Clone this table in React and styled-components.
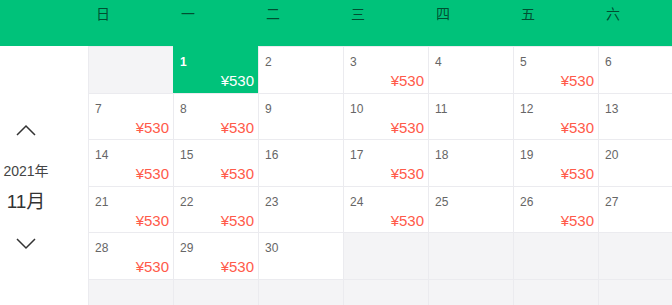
import React from "react";
import styled, { createGlobalStyle } from "styled-components";

const GlobalStyle = createGlobalStyle`
  html, body {
    margin: 0;
    padding: 0;
    background: #ffffff;
    font-family: "Liberation Sans", "Noto Sans CJK SC", sans-serif;
  }
`;

const WEEK = ["日", "一", "二", "三", "四", "五", "六"];
const PRICE_DAYS = [0, 1, 3, 5];
const FIRST_WEEKDAY = 1;
const DAYS_IN_MONTH = 30;

const buildCells = () => {
  const cells = [];
  for (let i = 0; i < 42; i++) {
    const day = i - FIRST_WEEKDAY + 1;
    if (day < 1 || day > DAYS_IN_MONTH) {
      cells.push({ key: i, empty: true });
    } else {
      cells.push({
        key: i,
        day,
        price: PRICE_DAYS.includes(i % 7) ? "¥530" : null,
        active: day === 1,
      });
    }
  }
  return cells;
};

const Chevron = ({ up }) => (
  <svg width="20" height="12" viewBox="0 0 20 12" fill="none">
    <polyline
      points={up ? "1,11 10,2 19,11" : "1,1 10,10 19,1"}
      stroke="#333"
      strokeWidth="1.5"
    />
  </svg>
);

const App = () => {
  const cells = buildCells();
  return (
    <Page>
      <GlobalStyle />
      <WeekBar>
        <SideSpacer />
        {WEEK.map((w) => (
          <WeekLabel key={w}>{w}</WeekLabel>
        ))}
      </WeekBar>
      <Body>
        <Side>
          <MonthNav>
            <ArrowButton>
              <Chevron up />
            </ArrowButton>
            <Year>2021年</Year>
            <Month>11月</Month>
            <ArrowButton>
              <Chevron />
            </ArrowButton>
          </MonthNav>
        </Side>
        <Grid>
          {cells.map((c) =>
            c.empty ? (
              <Cell key={c.key} $empty />
            ) : (
              <Cell key={c.key} $active={c.active}>
                <DayNum $active={c.active}>{c.day}</DayNum>
                {c.price && <Price $active={c.active}>{c.price}</Price>}
              </Cell>
            )
          )}
        </Grid>
      </Body>
    </Page>
  );
};

export default App;

const Page = styled.div`
  width: 672px;
  height: 305px;
  overflow: hidden;
`;

const WeekBar = styled.div`
  display: flex;
  height: 46px;
  background-color: #00c27a;
`;

const SideSpacer = styled.div`
  width: 88px;
  flex-shrink: 0;
`;

const WeekLabel = styled.div`
  width: 85px;
  flex-shrink: 0;
  padding: 6px 0 0 8px;
  box-sizing: border-box;
  font-size: 14px;
  line-height: 17px;
  color: rgba(0, 0, 0, 0.62);
`;

const Body = styled.div`
  display: flex;
`;

const Side = styled.div`
  width: 88px;
  flex-shrink: 0;
  display: flex;
  align-items: center;
  padding-top: 3px;
  box-sizing: border-box;
`;

const MonthNav = styled.div`
  width: 52px;
  display: flex;
  flex-direction: column;
  align-items: center;
  color: #333;
`;

const ArrowButton = styled.div`
  display: flex;
  justify-content: center;
  height: 12px;
`;

const Year = styled.div`
  margin-top: 27px;
  font-size: 14px;
  line-height: 16px;
  color: #444;
`;

const Month = styled.div`
  margin-top: 12px;
  font-size: 19px;
  line-height: 22px;
  color: #333;
  margin-bottom: 25px;
`;

const Grid = styled.div`
  display: grid;
  grid-template-columns: repeat(7, 85px);
  grid-auto-rows: 46.6px;
  flex-shrink: 0;
`;

const Cell = styled.div`
  box-sizing: border-box;
  border-left: 1px solid #ebebef;
  border-top: 1px solid #ebebef;
  background-color: ${(p) =>
    p.$active ? "#00c27a" : p.$empty ? "#f4f4f6" : "#ffffff"};
  border-color: ${(p) => (p.$active ? "#00c27a" : "#ebebef")};
  display: flex;
  flex-direction: column;
  padding: 8px 4px 0 6px;
`;

const DayNum = styled.span`
  font-size: 12px;
  line-height: 14px;
  color: ${(p) => (p.$active ? "#ffffff" : "#666")};
  font-weight: ${(p) => (p.$active ? 600 : 400)};
`;

const Price = styled.span`
  align-self: flex-end;
  margin-top: 3px;
  font-size: 15px;
  line-height: 17px;
  color: ${(p) => (p.$active ? "#ffffff" : "#ff5a4a")};
`;
